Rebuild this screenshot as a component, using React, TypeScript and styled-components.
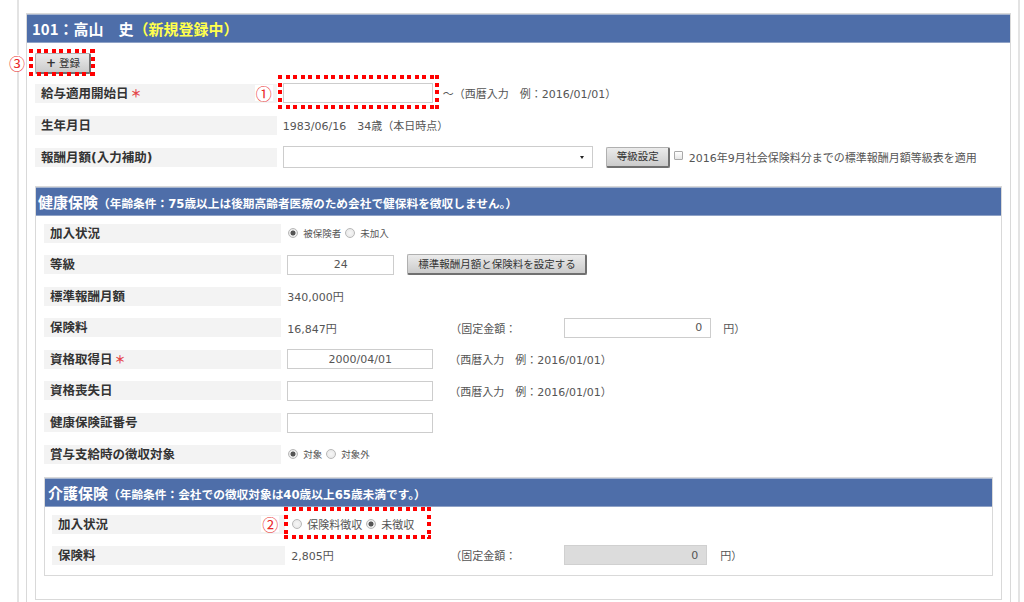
import React from 'react';
import styled, { createGlobalStyle } from 'styled-components';

const GlobalStyle = createGlobalStyle`
  html, body {
    margin: 0;
    padding: 0;
    background: #fff;
    overflow: hidden;
  }
  body {
    font-family: "DejaVu Sans", "Noto Sans CJK JP", sans-serif;
    font-size: 11px;
    color: #555;
  }
  *, *::before, *::after {
    box-sizing: border-box;
  }
`;

const Frame = styled.div`
  width: 1003px;
  height: 602px;
  margin-left: 17px;
  padding: 13px 7px 0;
  border-left: 2px solid #e3e3e3;
  border-right: 2px solid #e3e3e3;
`;

const Panel = styled.section<{ $mt?: number }>`
  margin-top: ${(p) => p.$mt ?? 0}px;
  border: 1px solid #d9d9d9;
  background: #fff;
`;

const PanelHeader = styled.h2<{ $pad: number }>`
  margin: 0;
  height: 29px;
  line-height: 27px;
  padding-left: ${(p) => p.$pad}px;
  background: #4e6ea9;
  border-top: 1px solid #a7b5cf;
  border-bottom: 1px solid #8fa2c6;
  color: #fff;
  font-family: "Noto Sans CJK JP", sans-serif;
  font-size: 15px;
  font-weight: bold;
  white-space: nowrap;
`;

const Status = styled.span`
  color: #ffff4d;
`;

const Condition = styled.span`
  font-family: "DejaVu Sans", "Noto Sans CJK JP", sans-serif;
  font-size: 11.7px;
`;

const PanelBody = styled.div<{ $pt: number; $pb: number; $px: number }>`
  padding: ${(p) => `${p.$pt}px ${p.$px}px ${p.$pb}px`};
`;

const Toolbar = styled.div`
  display: flex;
  align-items: center;
  height: 20px;
`;

const Fields = styled.div<{ $gap: number; $mt?: number }>`
  display: flex;
  flex-direction: column;
  gap: ${(p) => p.$gap}px;
  margin-top: ${(p) => p.$mt ?? 0}px;
`;

const Row = styled.div`
  display: flex;
  align-items: center;
  height: 22px;
`;

const Label = styled.div`
  flex: 0 0 25%;
  height: 19px;
  line-height: 19px;
  padding-left: 6px;
  background: #f3f3f3;
  color: #333;
  font-size: 12.5px;
  font-weight: bold;
  white-space: nowrap;
`;

const Req = styled.span`
  margin-left: 2px;
  color: #e4474a;
  font-family: "Noto Sans CJK JP", sans-serif;
  font-size: 11px;
  font-weight: bold;
`;

const Value = styled.div`
  flex: 1;
  display: flex;
  align-items: center;
  margin-left: 6px;
  min-width: 0;
  white-space: nowrap;
`;

const Text = styled.span<{ $w?: number; $ml?: number }>`
  display: inline-block;
  ${(p) => (p.$w ? `width: ${p.$w}px;` : '')}
  margin-left: ${(p) => p.$ml ?? 0}px;
  color: #555;
  font-size: 11px;
  white-space: nowrap;
`;

const TextInput = styled.input<{ $w: number; $align?: 'left' | 'center' | 'right' }>`
  width: ${(p) => p.$w}px;
  height: 20px;
  padding: 0 8px;
  border: 1px solid #cdcdcd;
  border-radius: 0;
  background: #fff;
  color: #555;
  font-family: inherit;
  font-size: 11px;
  text-align: ${(p) => p.$align ?? 'left'};
  outline: none;

  &:disabled {
    background: #dcdcdc;
    border-color: #d0d0d0;
    color: #555;
  }
`;

const Select = styled.div`
  display: flex;
  align-items: center;
  justify-content: flex-end;
  width: 310px;
  height: 22px;
  padding-right: 8px;
  border: 1px solid #cdcdcd;
  background: #fff;

  &::after {
    content: '';
    border-left: 2px solid transparent;
    border-right: 2px solid transparent;
    border-top: 3px solid #222;
  }
`;

const Button = styled.button<{ $ml?: number }>`
  height: 21px;
  margin-left: ${(p) => p.$ml ?? 0}px;
  padding: 0 9px 0 10px;
  border: 1px solid #b0b0b0;
  border-right: 2px solid #707070;
  border-bottom: 2px solid #707070;
  border-radius: 2px;
  background: linear-gradient(#ebebeb, #cbcbcb);
  color: #333;
  font-family: "Noto Sans CJK JP", sans-serif;
  font-size: 10.5px;
  line-height: 1;
  white-space: nowrap;
`;

const Plus = styled.span`
  margin-right: 3px;
  font-family: "DejaVu Sans", sans-serif;
  font-size: 12px;
  font-weight: bold;
`;

const Checkbox = styled.span<{ $ml?: number }>`
  display: inline-block;
  width: 9px;
  height: 9px;
  margin-left: ${(p) => p.$ml ?? 0}px;
  margin-top: -4px;
  border: 1px solid #a9a9a9;
  border-radius: 1px;
  background: linear-gradient(#fff, #e6e6e6);
`;

const RadioGroup = styled.span`
  display: inline-flex;
  align-items: center;
  margin-left: 1px;
`;

const RadioDot = styled.span<{ $on?: boolean }>`
  display: inline-block;
  width: 10px;
  height: 10px;
  border-radius: 50%;
  border: 1px solid #b8b8b8;
  background: ${(p) =>
    p.$on
      ? 'radial-gradient(circle, #555 0 2.2px, #eaeaea 2.8px)'
      : 'radial-gradient(circle, #f7f7f7, #e4e4e4)'};
`;

const RadioText = styled.span<{ $size: number }>`
  margin: 0 4px 0 5px;
  color: #555;
  font-family: "Noto Sans CJK JP", sans-serif;
  font-size: ${(p) => p.$size}px;
`;

const Callout = styled.span<{ $t: number; $r: number; $b: number; $l: number }>`
  position: relative;
  display: inline-flex;
  align-items: center;

  &::before {
    content: '';
    position: absolute;
    top: -${(p) => p.$t}px;
    right: -${(p) => p.$r}px;
    bottom: -${(p) => p.$b}px;
    left: -${(p) => p.$l}px;
    pointer-events: none;
    background:
      repeating-linear-gradient(90deg, #f00 0 4px, transparent 4px 7.6px) top / 100% 4px no-repeat,
      repeating-linear-gradient(90deg, #f00 0 4px, transparent 4px 7.6px) bottom / 100% 4px no-repeat,
      repeating-linear-gradient(180deg, #f00 0 4px, transparent 4px 7.6px) left / 4px 100% no-repeat,
      repeating-linear-gradient(180deg, #f00 0 4px, transparent 4px 7.6px) right / 4px 100% no-repeat;
  }
`;

const CalloutNo = styled.span<{ $gap: number }>`
  position: absolute;
  right: calc(100% + ${(p) => p.$gap}px);
  top: 50%;
  transform: translateY(-50%);
  padding: 0 1px;
  color: #ea2a2a;
  font-family: "Noto Sans CJK JP", sans-serif;
  font-size: 16px;
  line-height: 1;
  background: #fff;
`;

type RadioOption = { label: string; on?: boolean };

const Radios = ({ options, size }: { options: RadioOption[]; size: number }) => (
  <RadioGroup>
    {options.map((o) => (
      <React.Fragment key={o.label}>
        <RadioDot $on={o.on} />
        <RadioText $size={size}>{o.label}</RadioText>
      </React.Fragment>
    ))}
  </RadioGroup>
);

const Field = ({ label, req, children }: { label: string; req?: boolean; children?: React.ReactNode }) => (
  <Row>
    <Label>
      {label}
      {req && <Req>＊</Req>}
    </Label>
    <Value>{children}</Value>
  </Row>
);

const DATE_HINT = '（西暦入力　例：2016/01/01）';

const App: React.FC = () => {
  return (
    <>
      <GlobalStyle />
      <Frame>
        <Panel>
          <PanelHeader $pad={5}>
            101：高山　史<Status>（新規登録中）</Status>
          </PanelHeader>
          <PanelBody $pt={10} $pb={20} $px={8}>
            <Toolbar>
              <Callout $t={4} $r={4} $b={2} $l={6}>
                <CalloutNo $gap={9}>③</CalloutNo>
                <Button>
                  <Plus>+</Plus>登録
                </Button>
              </Callout>
            </Toolbar>

            <Fields $gap={10} $mt={9}>
              <Field label="給与適用開始日" req>
                <Callout $t={8} $r={6} $b={6} $l={5}>
                  <CalloutNo $gap={10}>①</CalloutNo>
                  <TextInput $w={150} readOnly />
                </Callout>
                <Text $ml={10}>～{DATE_HINT}</Text>
              </Field>
              <Field label="生年月日">
                <Text>1983/06/16　34歳（本日時点）</Text>
              </Field>
              <Field label="報酬月額(入力補助)">
                <Select />
                <Button $ml={13}>等級設定</Button>
                <Checkbox $ml={4} />
                <Text $ml={6}>2016年9月社会保険料分までの標準報酬月額等級表を適用</Text>
              </Field>
            </Fields>

            <Panel $mt={18}>
              <PanelHeader $pad={2}>
                健康保険<Condition>（年齢条件：75歳以上は後期高齢者医療のため会社で健保料を徴収しません。）</Condition>
              </PanelHeader>
              <PanelBody $pt={6} $pb={23} $px={8}>
                <Fields $gap={9.6}>
                  <Field label="加入状況">
                    <Radios size={9.5} options={[{ label: '被保険者', on: true }, { label: '未加入' }]} />
                  </Field>
                  <Field label="等級">
                    <TextInput $w={107} $align="center" value="24" readOnly />
                    <Button $ml={13}>標準報酬月額と保険料を設定する</Button>
                  </Field>
                  <Field label="標準報酬月額">
                    <Text>340,000円</Text>
                  </Field>
                  <Field label="保険料">
                    <Text $w={163}>16,847円</Text>
                    <Text $w={114}>（固定金額：</Text>
                    <TextInput $w={147} $align="right" value="0" readOnly />
                    <Text $ml={12}>円）</Text>
                  </Field>
                  <Field label="資格取得日" req>
                    <TextInput $w={146} $align="center" value="2000/04/01" readOnly />
                    <Text $ml={16}>{DATE_HINT}</Text>
                  </Field>
                  <Field label="資格喪失日">
                    <TextInput $w={146} readOnly />
                    <Text $ml={16}>{DATE_HINT}</Text>
                  </Field>
                  <Field label="健康保険証番号">
                    <TextInput $w={146} readOnly />
                  </Field>
                  <Field label="賞与支給時の徴収対象">
                    <Radios size={9.5} options={[{ label: '対象', on: true }, { label: '対象外' }]} />
                  </Field>
                </Fields>

                <Panel $mt={12}>
                  <PanelHeader $pad={3}>
                    介護保険<Condition>（年齢条件：会社での徴収対象は40歳以上65歳未満です。）</Condition>
                  </PanelHeader>
                  <PanelBody $pt={6} $pb={9} $px={7}>
                    <Fields $gap={9}>
                      <Field label="加入状況">
                        <Callout $t={9} $r={13} $b={7} $l={7}>
                          <CalloutNo $gap={12}>②</CalloutNo>
                          <Radios size={11} options={[{ label: '保険料徴収' }, { label: '未徴収', on: true }]} />
                        </Callout>
                      </Field>
                      <Field label="保険料">
                        <Text $w={159}>2,805円</Text>
                        <Text $w={114}>（固定金額：</Text>
                        <TextInput $w={143} $align="right" value="0" disabled />
                        <Text $ml={13}>円）</Text>
                      </Field>
                    </Fields>
                  </PanelBody>
                </Panel>
              </PanelBody>
            </Panel>
          </PanelBody>
        </Panel>
      </Frame>
    </>
  );
};

export default App;
